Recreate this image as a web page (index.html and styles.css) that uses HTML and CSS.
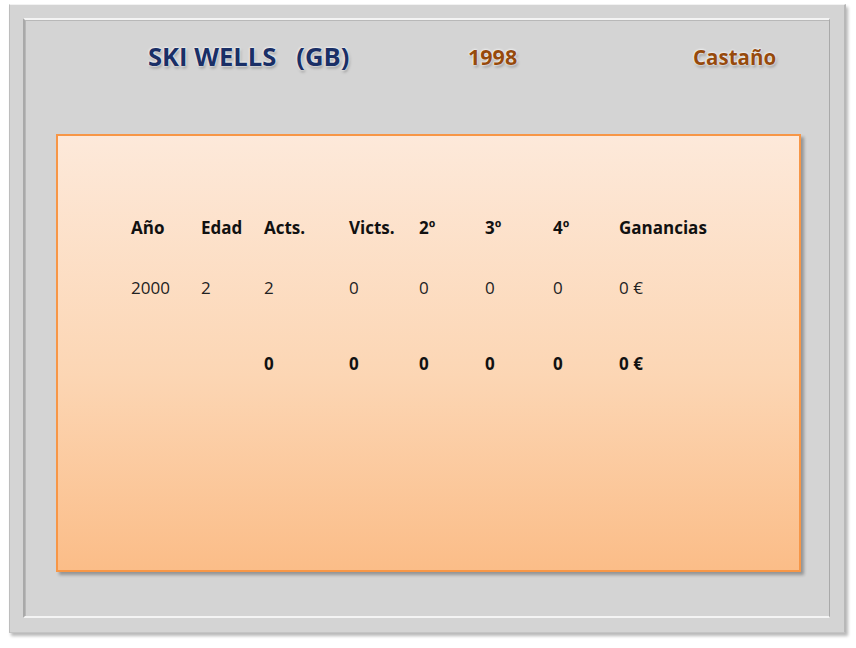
FILE: index.html
```html
<!DOCTYPE html>
<html lang="es">
<head>
<meta charset="utf-8">
<title>Ski Wells</title>
<link rel="stylesheet" href="styles.css">
</head>
<body>
<div class="frame">
  <div class="inner">
    <div class="header">
      <div class="title">SKI WELLS&nbsp;&nbsp; (GB)</div>
      <div class="year">1998</div>
      <div class="coat">Castaño</div>
    </div>
    <div class="card">
      <div class="table">
        <div class="row head">
          <span>Año</span><span>Edad</span><span>Acts.</span><span>Victs.</span><span>2º</span><span>3º</span><span>4º</span><span>Ganancias</span>
        </div>
        <div class="row data">
          <span>2000</span><span>2</span><span>2</span><span>0</span><span>0</span><span>0</span><span>0</span><span>0 €</span>
        </div>
        <div class="row total">
          <span></span><span></span><span>0</span><span>0</span><span>0</span><span>0</span><span>0</span><span>0 €</span>
        </div>
      </div>
    </div>
  </div>
</div>
</body>
</html>
```
FILE: styles.css
```css
html, body {
  margin: 0;
  padding: 0;
  background: #ffffff;
}
body {
  width: 856px;
  height: 648px;
  padding: 4px 0 0 9px;
  box-sizing: border-box;
  font-family: "Open Sans", "Liberation Sans", sans-serif;
}
.frame {
  width: 837px;
  height: 629px;
  box-sizing: border-box;
  background: #d4d4d4;
  border-top: 1px solid #f2f2f2;
  border-left: 1px solid #bdbdbd;
  border-right: 2px solid #b8b8b8;
  border-bottom: 1px solid #c4c4c4;
  box-shadow: 2px 3px 3px rgba(0, 0, 0, 0.28);
  padding: 13px 14px 14px 13px;
}
.inner {
  height: 100%;
  box-sizing: border-box;
  border-top: 2px solid #f4f4f4;
  border-left: 2px solid #a9a9a9;
  border-right: 1px solid #a9a9a9;
  border-bottom: 2px solid #f4f4f4;
  box-shadow: inset 1px 1px 0 #b8b8b8;
}
.header {
  display: grid;
  grid-template-columns: 320px 225px auto;
  padding: 21px 0 0 123px;
  height: 92px;
  box-sizing: border-box;
  font-weight: 700;
  text-shadow: 0 0 2px #ffffff, 0 0 3px #ffffff, 1px 2px 3px rgba(0, 0, 0, 0.35);
}
.title {
  color: #1a2f66;
  font-size: 25.6px;
  line-height: 32px;
}
.year {
  color: #964a0c;
  font-size: 21.5px;
  line-height: 32px;
}
.coat {
  color: #964a0c;
  font-size: 20.5px;
  line-height: 32px;
}
.card {
  margin: 22px 0 0 31px;
  width: 745px;
  height: 438px;
  box-sizing: border-box;
  border: 2px solid #f79646;
  background: linear-gradient(to bottom, #fde9da 0%, #fcd6b4 55%, #fbbd88 100%);
  box-shadow: 3px 3px 3px rgba(0, 0, 0, 0.3);
  padding: 80px 0 0 73px;
}
.row {
  display: grid;
  grid-template-columns: 70px 63px 85px 70px 66px 68px 66px auto;
  font-size: 17px;
  color: #111111;
  line-height: 24px;
}
.head { font-weight: 700; }
.data { margin-top: 36px; color: #222222; }
.total { margin-top: 52px; font-weight: 700; }
```
